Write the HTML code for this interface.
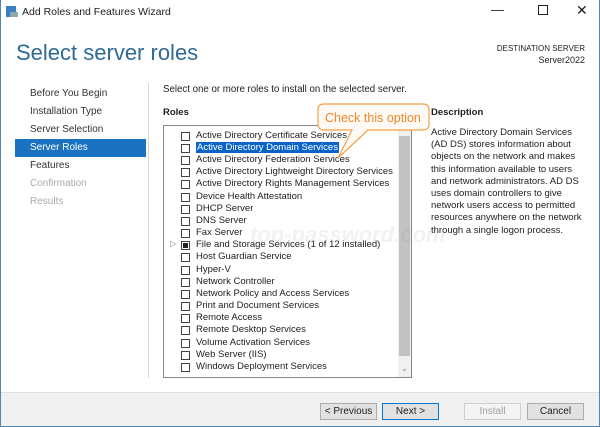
<!DOCTYPE html>
<html><head><style>
*{margin:0;padding:0;box-sizing:border-box}
body{width:600px;height:427px;overflow:hidden;background:#fff;font-family:"Liberation Sans",sans-serif;font-size:10px;color:#1e1e1e;position:relative}
.win{position:absolute;inset:0;border:1px solid #4a86b8;border-top:none}
.a{position:absolute;white-space:nowrap}
.nav{left:30px;color:#333;font-size:10px}
.row{position:absolute;left:181px;height:12px}
.cb{position:absolute;left:0;top:1px;width:9px;height:9px;border:1px solid #444;background:#fff}
.row span{position:absolute;left:15px;top:-1px;white-space:nowrap;font-size:9.5px}
.btn{position:absolute;top:403px;height:17px;border:1px solid #adadad;background:#e1e1e1;text-align:center;line-height:15px;font-size:10px}
</style></head><body>
<div class="win"></div>
<div class="a" style="left:6px;top:6px;width:10px;height:11px;background:#3a7fc0"></div>
<div class="a" style="left:10px;top:12px;width:8px;height:5px;background:#8aa"></div>
<div class="a" style="left:22px;top:6px;font-size:10.5px">Add Roles and Features Wizard</div>
<div class="a" style="left:491px;top:2px;font-size:13px">—</div>
<div class="a" style="left:538px;top:5px;width:10px;height:10px;border:1px solid #222"></div>
<div class="a" style="left:576px;top:2px;font-size:14px;font-weight:lighter">✕</div>
<div class="a" style="left:16px;top:40px;font-size:22px;color:#2d6a96">Select server roles</div>
<div class="a" style="right:15px;top:44px;font-size:8px;text-align:right">DESTINATION SERVER</div>
<div class="a" style="right:15px;top:55px;font-size:9px">Server2022</div>
<div class="a" style="left:148px;top:83px;width:1px;height:295px;background:#d8d8d8"></div>
<div class="a nav" style="top:88px">Before You Begin</div>
<div class="a nav" style="top:106px">Installation Type</div>
<div class="a nav" style="top:124px">Server Selection</div>
<div class="a" style="left:15px;top:139px;width:131px;height:18px;background:#1b72c0"></div>
<div class="a nav" style="top:142px;color:#fff">Server Roles</div>
<div class="a nav" style="top:160px">Features</div>
<div class="a nav" style="top:178px;color:#aaa">Confirmation</div>
<div class="a nav" style="top:196px;color:#aaa">Results</div>
<div class="a" style="left:163px;top:84px;font-size:9.7px">Select one or more roles to install on the selected server.</div>
<div class="a" style="left:163px;top:107px;font-weight:bold;font-size:9.5px">Roles</div>
<div class="a" style="left:431px;top:107px;font-weight:bold;font-size:9.5px">Description</div>
<div class="a" style="left:431px;top:127px;line-height:12.2px;font-size:9.5px">Active Directory Domain Services<br>(AD DS) stores information about<br>objects on the network and makes<br>this information available to users<br>and network administrators. AD DS<br>uses domain controllers to give<br>network users access to permitted<br>resources anywhere on the network<br>through a single logon process.</div>
<div class="a" style="left:163px;top:125px;width:249px;height:253px;border:1px solid #828790;background:#fff"></div>
<div class="a" style="left:398px;top:126px;width:13px;height:251px;background:#f0f0f0"></div>
<div class="a" style="left:399px;top:136px;width:11px;height:220px;background:#c2c2c2"></div>
<div class="a" style="left:401px;top:364px;font-size:8px;color:#888">⌄</div>
<div class="row" style="top:131px"><div class="cb"></div><span>Active Directory Certificate Services</span></div>
<div class="row" style="top:143px"><div class="cb"></div><span style="background:#0a64c8;color:#fff;padding:0 1px">Active Directory Domain Services</span></div>
<div class="row" style="top:155px"><div class="cb"></div><span>Active Directory Federation Services</span></div>
<div class="row" style="top:167px"><div class="cb"></div><span>Active Directory Lightweight Directory Services</span></div>
<div class="row" style="top:179px"><div class="cb"></div><span>Active Directory Rights Management Services</span></div>
<div class="row" style="top:192px"><div class="cb"></div><span>Device Health Attestation</span></div>
<div class="row" style="top:204px"><div class="cb"></div><span>DHCP Server</span></div>
<div class="row" style="top:216px"><div class="cb"></div><span>DNS Server</span></div>
<div class="row" style="top:228px"><div class="cb"></div><span>Fax Server</span></div>
<div class="a" style="left:170px;top:239px;font-size:8px;color:#777">▷</div>
<div class="row" style="top:240px"><div class="cb"><div style="margin:1px;width:5px;height:5px;background:#222"></div></div><span>File and Storage Services (1 of 12 installed)</span></div>
<div class="row" style="top:252px"><div class="cb"></div><span>Host Guardian Service</span></div>
<div class="row" style="top:265px"><div class="cb"></div><span>Hyper-V</span></div>
<div class="row" style="top:277px"><div class="cb"></div><span>Network Controller</span></div>
<div class="row" style="top:289px"><div class="cb"></div><span>Network Policy and Access Services</span></div>
<div class="row" style="top:301px"><div class="cb"></div><span>Print and Document Services</span></div>
<div class="row" style="top:313px"><div class="cb"></div><span>Remote Access</span></div>
<div class="row" style="top:325px"><div class="cb"></div><span>Remote Desktop Services</span></div>
<div class="row" style="top:338px"><div class="cb"></div><span>Volume Activation Services</span></div>
<div class="row" style="top:350px"><div class="cb"></div><span>Web Server (IIS)</span></div>
<div class="row" style="top:362px"><div class="cb"></div><span>Windows Deployment Services</span></div>
<div class="a" style="left:250px;top:222px;font-size:22px;font-style:italic;color:rgba(150,150,150,0.12);font-weight:bold">top-password.com</div>
<svg class="a" style="left:0;top:0" width="600" height="200">
<path d="M324 104 H423 Q429 104 429 110 V124 Q429 130 423 130 H368 L338 158 L352 130 H324 Q318 130 318 124 V110 Q318 104 324 104 Z" fill="#fffaf4" stroke="#f2a04a" stroke-width="1.2"/>
<text x="325" y="122" font-family="Liberation Sans,sans-serif" font-size="12.5" fill="#f0862a">Check this option</text>
</svg>
<div class="a" style="left:1px;top:392px;width:598px;height:34px;background:#f0f0f0;border-top:1px solid #dfdfdf"></div>
<div class="btn" style="left:320px;width:57px">&lt; Previous</div>
<div class="btn" style="left:382px;width:57px;border-color:#0078d7">Next &gt;</div>
<div class="btn" style="left:464px;width:57px;color:#a0a0a0;background:#f4f4f4;border-color:#cfcfcf">Install</div>
<div class="btn" style="left:527px;width:57px">Cancel</div>
</body></html>
